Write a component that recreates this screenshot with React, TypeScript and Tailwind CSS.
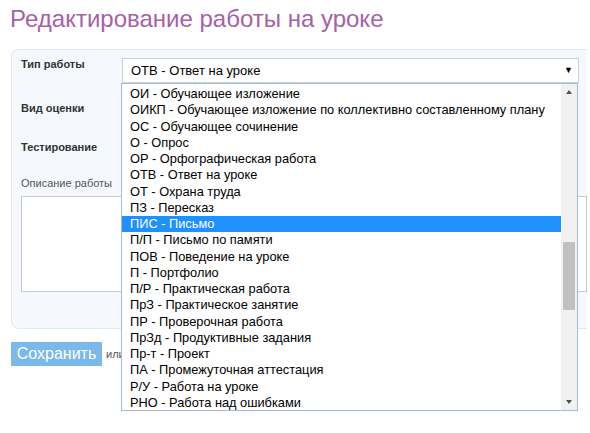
import React from "react";

const items = [
  "ОИ - Обучающее изложение",
  "ОИКП - Обучающее изложение по коллективно составленному плану",
  "ОС - Обучающее сочинение",
  "О - Опрос",
  "ОР - Орфографическая работа",
  "ОТВ - Ответ на уроке",
  "ОТ - Охрана труда",
  "ПЗ - Пересказ",
  "ПИС - Письмо",
  "П/П - Письмо по памяти",
  "ПОВ - Поведение на уроке",
  "П - Портфолио",
  "П/Р - Практическая работа",
  "ПрЗ - Практическое занятие",
  "ПР - Проверочная работа",
  "ПрЗд - Продуктивные задания",
  "Пр-т - Проект",
  "ПА - Промежуточная аттестация",
  "Р/У - Работа на уроке",
  "РНО - Работа над ошибками",
];

export default function App() {
  return (
    <div className="relative w-[590px] h-[433px] overflow-hidden bg-white font-['Liberation_Sans',Arial,sans-serif]">
      <h1 className="pl-[10px] pt-[5px] text-[24px] leading-[28px] text-[#a661a9]">
        Редактирование работы на уроке
      </h1>

      {/* Form panel */}
      <div className="ml-[11px] mt-[16px] w-[576px] h-[280px] rounded-l-lg border border-r-0 border-[#e2e7ef] bg-[#f5f8fd] pl-[9px] pt-[7px]">
        <div className="flex items-start h-[26px]">
          <div className="w-[101px] text-[11px] leading-[14px] font-bold text-[#333]">Тип работы</div>
          <div className="mt-[1px] flex items-center justify-between w-[457px] h-[25px] bg-white border border-[#cdd1d6] pl-[8px] pr-[5px] text-[13px] text-black">
            <span>ОТВ - Ответ на уроке</span>
            <span className="text-[9px]">▼</span>
          </div>
        </div>
        <div className="mt-[18px] text-[11px] leading-[14px] font-bold text-[#333]">Вид оценки</div>
        <div className="mt-[25px] text-[11px] leading-[14px] font-bold text-[#333]">Тестирование</div>
        <div className="mt-[22px] text-[11px] leading-[14px] text-[#555]">Описание работы</div>
        <div className="mt-[6px] h-[96px] bg-white border border-[#c8ccd2]" />
      </div>

      <div className="flex items-center mt-[13px] ml-[11px]">
        <button className="w-[91px] h-[24px] bg-[#7ab9ea] text-white text-[16px] leading-[24px]">Сохранить</button>
        <span className="ml-[4px] text-[11px] text-[#555]">или</span>
      </div>

      {/* Open dropdown list */}
      <div className="absolute left-[121px] top-[83px] w-[457px] h-[328px] border border-[#a5b9df] bg-white flex overflow-hidden">
        <div className="flex-1 pt-[2px] overflow-hidden">
          {items.map((t, i) => (
            <div
              key={t}
              className={
                "h-[16.25px] pl-[8px] text-[12.8px] leading-[16.25px] whitespace-nowrap " +
                (i === 8 ? "bg-[#1e90ff] text-white" : "text-black")
              }
            >
              {t}
            </div>
          ))}
        </div>
        <div className="relative w-[16px] bg-[#f1f1f1]">
          <div className="absolute left-[5px] top-[6px] w-0 h-0 border-l-[3.5px] border-r-[3.5px] border-b-[4px] border-l-transparent border-r-transparent border-b-[#505050]" />
          <div className="absolute left-[2px] top-[158px] w-[12px] h-[68px] bg-[#c1c1c1]" />
          <div className="absolute left-[5px] bottom-[6px] w-0 h-0 border-l-[3.5px] border-r-[3.5px] border-t-[4px] border-l-transparent border-r-transparent border-t-[#505050]" />
        </div>
      </div>
    </div>
  );
}
